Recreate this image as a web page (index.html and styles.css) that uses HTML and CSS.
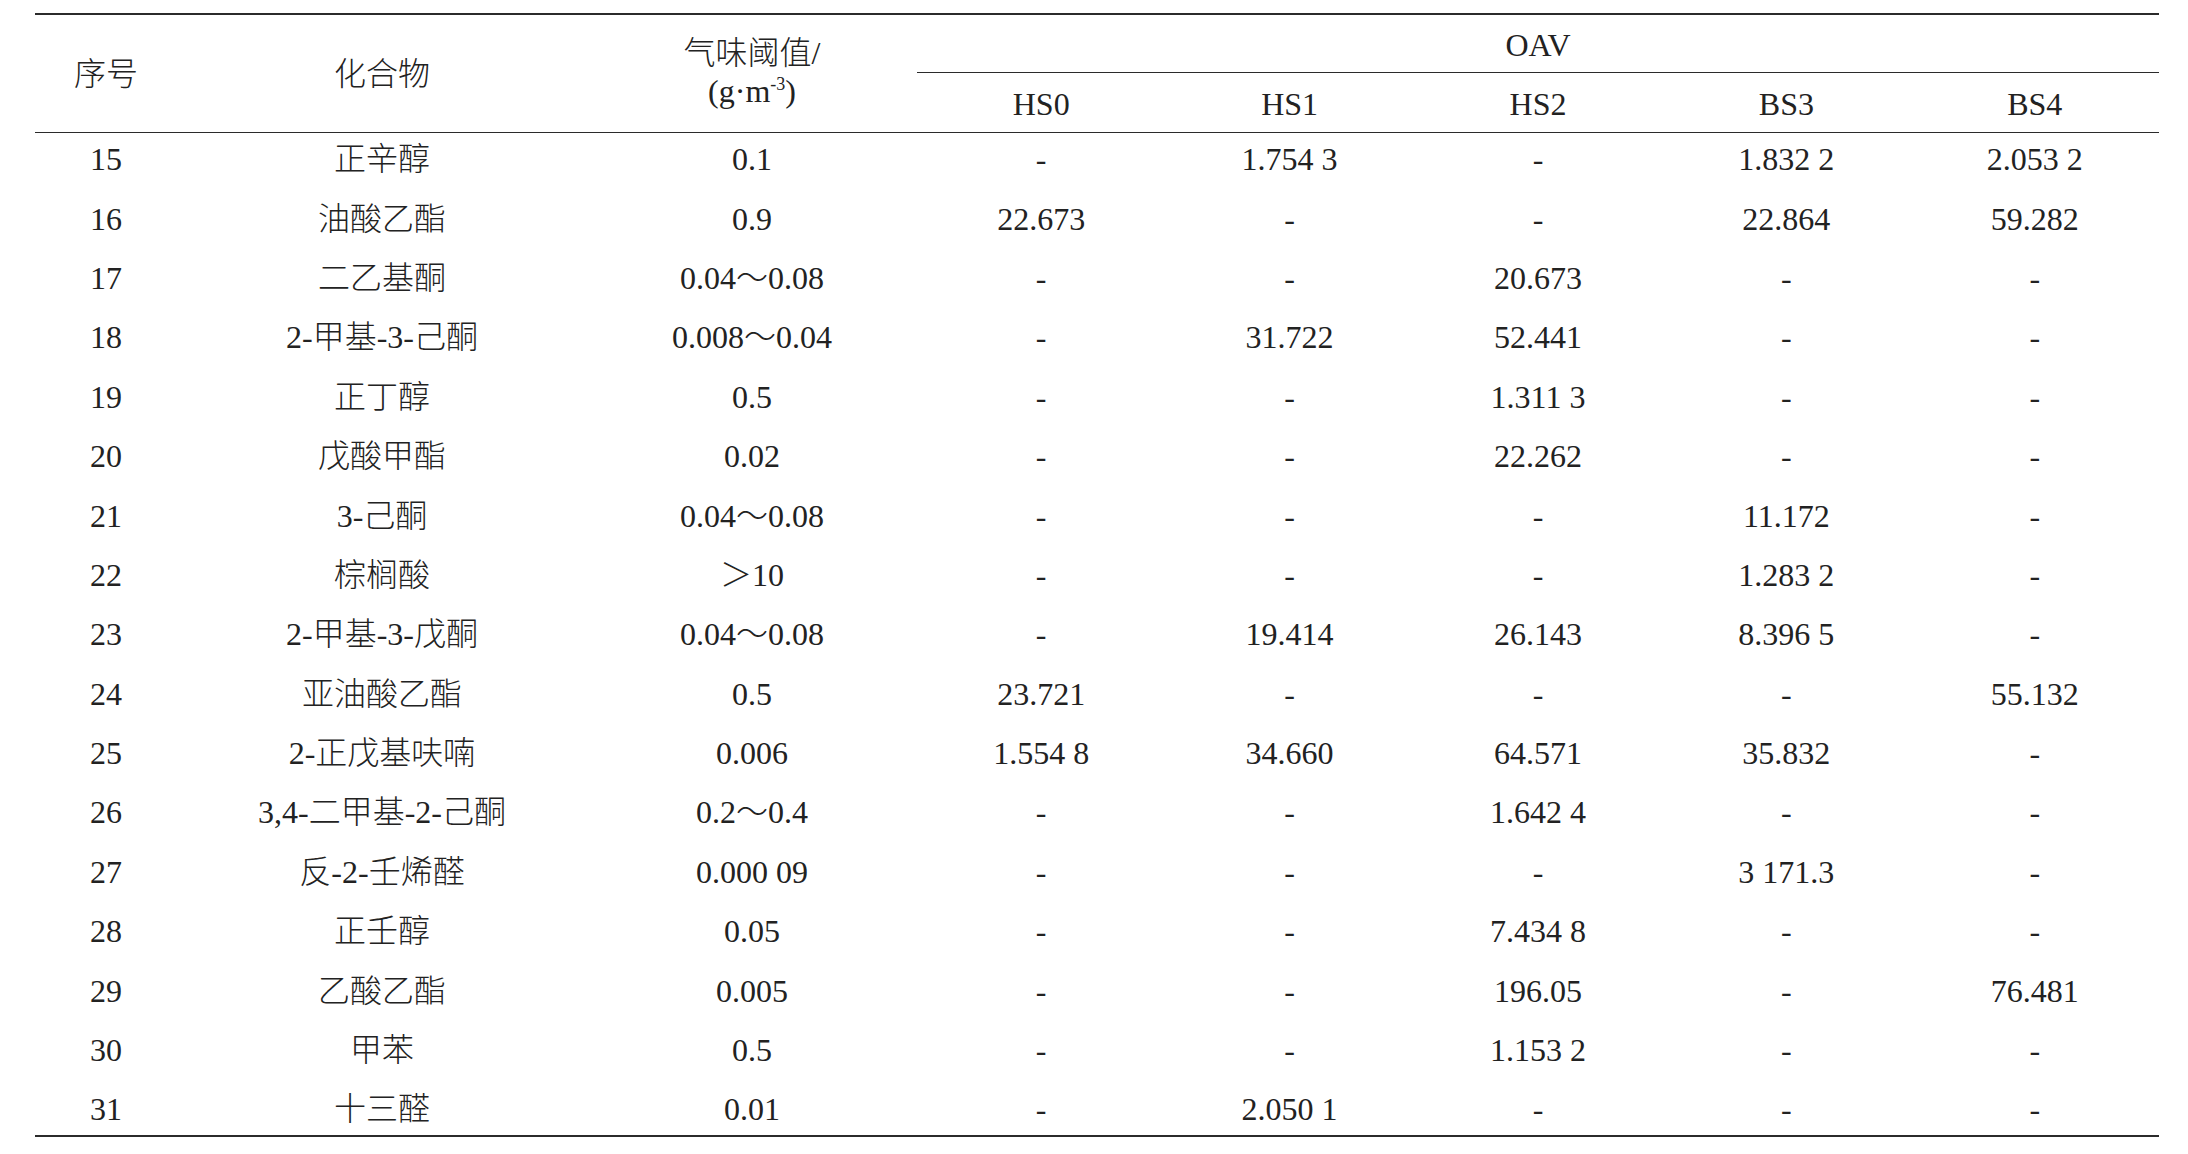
FILE: index.html
```html
<!DOCTYPE html>
<html>
<head>
    <title>OAV</title>
    <meta charset="UTF-8">
    <link rel="stylesheet" href="styles.css">
</head>
<body>
    <table class="oav-table">
        <colgroup>
            <col class="col-no">
            <col class="col-name">
            <col class="col-threshold">
            <col class="col-oav" span="5">
        </colgroup>
        <thead>
            <tr class="head-top">
                <th rowspan="2" class="head-span">序号</th>
                <th rowspan="2" class="head-span">化合物</th>
                <th rowspan="2" class="head-span threshold">气味阈值/<br>(g·m<sup>-3</sup>)</th>
                <th colspan="5" class="oav-group">OAV</th>
            </tr>
            <tr class="head-sub">
                <th>HS0</th>
                <th>HS1</th>
                <th>HS2</th>
                <th>BS3</th>
                <th>BS4</th>
            </tr>
        </thead>
        <tbody>
            <tr><td>15</td><td>正辛醇</td><td>0.1</td><td>-</td><td>1.754 3</td><td>-</td><td>1.832 2</td><td>2.053 2</td></tr>
            <tr><td>16</td><td>油酸乙酯</td><td>0.9</td><td>22.673</td><td>-</td><td>-</td><td>22.864</td><td>59.282</td></tr>
            <tr><td>17</td><td>二乙基酮</td><td>0.04～0.08</td><td>-</td><td>-</td><td>20.673</td><td>-</td><td>-</td></tr>
            <tr><td>18</td><td>2-甲基-3-己酮</td><td>0.008～0.04</td><td>-</td><td>31.722</td><td>52.441</td><td>-</td><td>-</td></tr>
            <tr><td>19</td><td>正丁醇</td><td>0.5</td><td>-</td><td>-</td><td>1.311 3</td><td>-</td><td>-</td></tr>
            <tr><td>20</td><td>戊酸甲酯</td><td>0.02</td><td>-</td><td>-</td><td>22.262</td><td>-</td><td>-</td></tr>
            <tr><td>21</td><td>3-己酮</td><td>0.04～0.08</td><td>-</td><td>-</td><td>-</td><td>11.172</td><td>-</td></tr>
            <tr><td>22</td><td>棕榈酸</td><td>＞10</td><td>-</td><td>-</td><td>-</td><td>1.283 2</td><td>-</td></tr>
            <tr><td>23</td><td>2-甲基-3-戊酮</td><td>0.04～0.08</td><td>-</td><td>19.414</td><td>26.143</td><td>8.396 5</td><td>-</td></tr>
            <tr><td>24</td><td>亚油酸乙酯</td><td>0.5</td><td>23.721</td><td>-</td><td>-</td><td>-</td><td>55.132</td></tr>
            <tr><td>25</td><td>2-正戊基呋喃</td><td>0.006</td><td>1.554 8</td><td>34.660</td><td>64.571</td><td>35.832</td><td>-</td></tr>
            <tr><td>26</td><td>3,4-二甲基-2-己酮</td><td>0.2～0.4</td><td>-</td><td>-</td><td>1.642 4</td><td>-</td><td>-</td></tr>
            <tr><td>27</td><td>反-2-壬烯醛</td><td>0.000 09</td><td>-</td><td>-</td><td>-</td><td>3 171.3</td><td>-</td></tr>
            <tr><td>28</td><td>正壬醇</td><td>0.05</td><td>-</td><td>-</td><td>7.434 8</td><td>-</td><td>-</td></tr>
            <tr><td>29</td><td>乙酸乙酯</td><td>0.005</td><td>-</td><td>-</td><td>196.05</td><td>-</td><td>76.481</td></tr>
            <tr><td>30</td><td>甲苯</td><td>0.5</td><td>-</td><td>-</td><td>1.153 2</td><td>-</td><td>-</td></tr>
            <tr class="last-row"><td>31</td><td>十三醛</td><td>0.01</td><td>-</td><td>2.050 1</td><td>-</td><td>-</td><td>-</td></tr>
        </tbody>
    </table>
</body>
</html>
```
FILE: styles.css
```css
body, html {
    margin: 0;
    padding: 0;
    box-sizing: border-box;
}

*, *:before, *:after {
    box-sizing: inherit;
}

body {
    font-family: "Liberation Serif", "Noto Sans CJK SC", serif;
    color: #222;
    background-color: #fff;
    padding: 13px 0 0 35px;
}

.oav-table {
    width: 2124px;
    table-layout: fixed;
    border-collapse: separate;
    border-spacing: 0;
    font-size: 32px;
    font-weight: 300;
}

.col-no {
    width: 142px;
}

.col-name {
    width: 410px;
}

.col-threshold {
    width: 330px;
}

.col-oav {
    width: 248.4px;
}

th, td {
    font-weight: 300;
    line-height: 36px;
    text-align: center;
    vertical-align: middle;
    padding: 0;
    white-space: nowrap;
}

/* header rules */
.head-top th {
    border-top: 2px solid #2b2b2b;
}

.head-top {
    height: 60px;
}

.head-sub {
    height: 60px;
}

.head-span, .head-sub th, .oav-group {
    border-bottom: 1px solid #2b2b2b;
}

.oav-group, .head-sub th {
    padding-top: 3px;
}

.threshold {
    line-height: 38px;
    padding-bottom: 3px;
}

sup {
    font-size: 18px;
    line-height: 0;
    vertical-align: 12px;
}

/* body rows */
tbody tr {
    height: 59.4px;
}

tbody td {
    padding-bottom: 7px;
}

tbody tr.last-row {
    height: 54px;
}

.last-row td {
    padding-bottom: 1px;
    border-bottom: 2px solid #2b2b2b;
}
```
